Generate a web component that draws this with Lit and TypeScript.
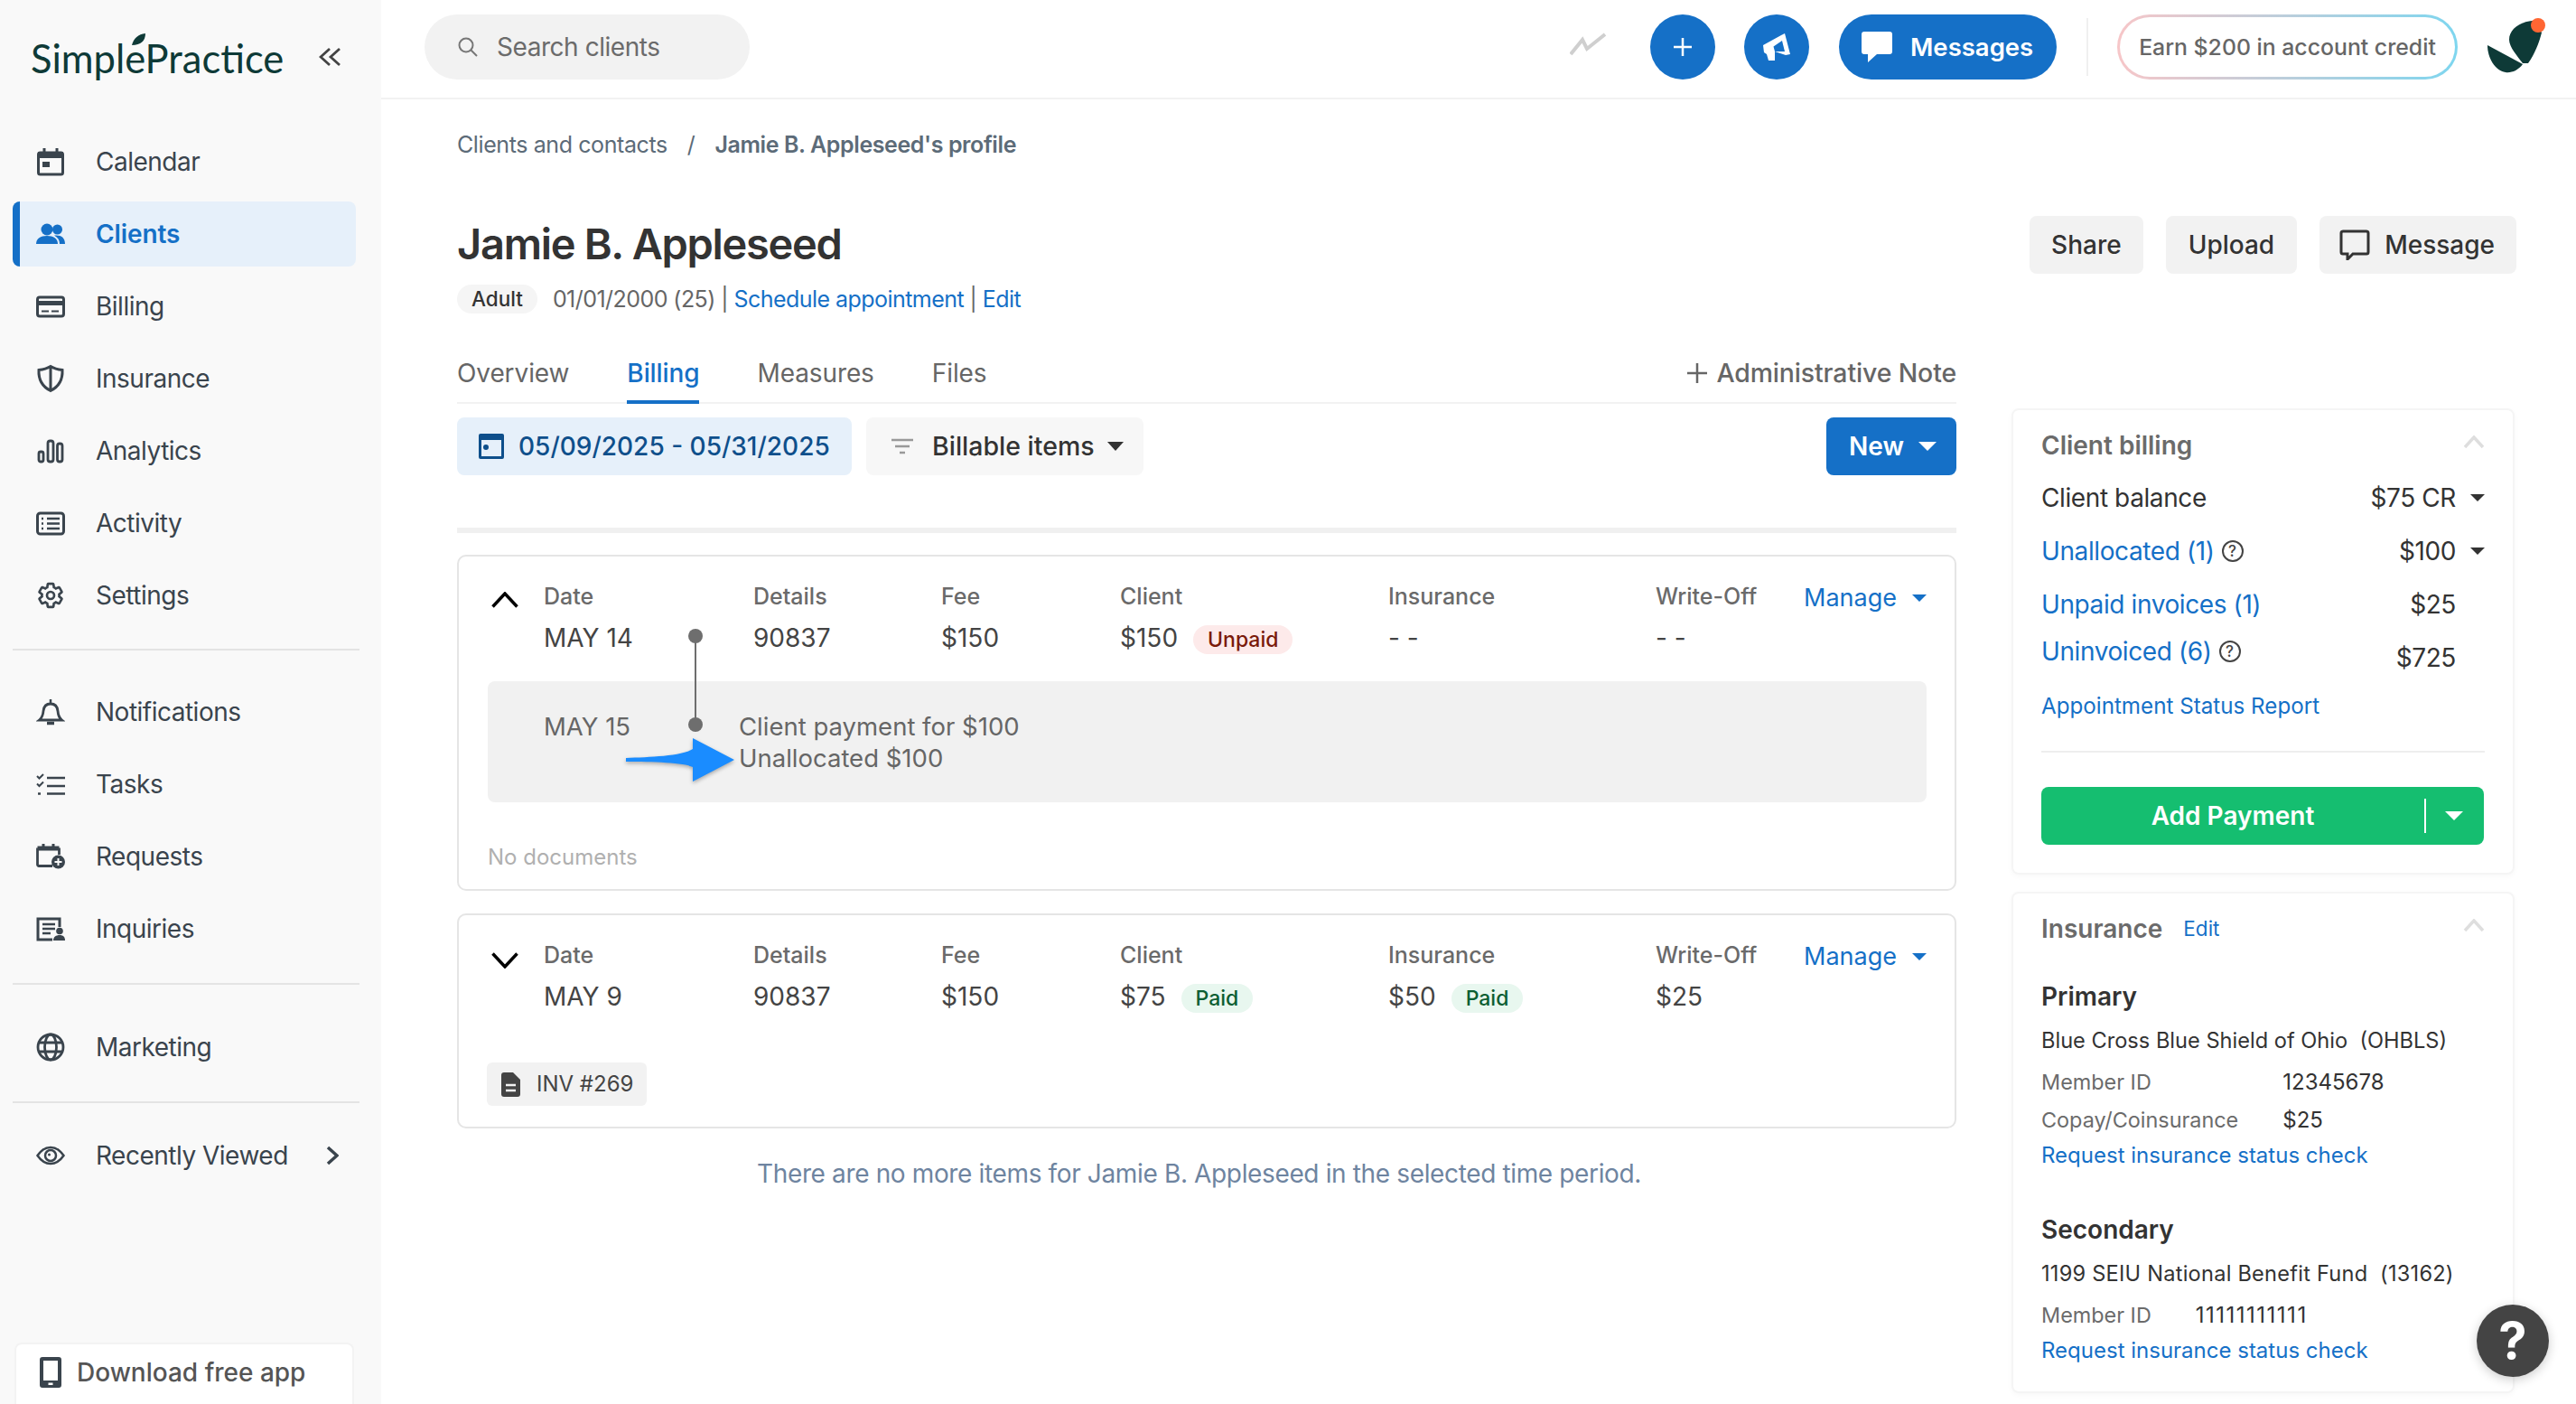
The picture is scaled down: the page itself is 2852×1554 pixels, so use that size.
import { LitElement, html, css, svg } from "lit";
import { customElement } from "lit/decorators.js";

const INK = "currentColor";

const ic = (body: unknown, w = 32, h = 32) => html`<svg class="ico" width=${w} height=${h} viewBox="0 0 ${w} ${h}" fill="none" stroke=${INK} stroke-width="3">${body}</svg>`;

const navIcons: Record<string, unknown> = {
  Calendar: ic(svg`<rect x="2.5" y="6" width="27" height="24" rx="2"/><rect x="2" y="5" width="28" height="7" fill="currentColor" stroke="none"/><path d="M9 1v6M23 1v6"/><rect x="7" y="16" width="8" height="6" fill="currentColor" stroke="none"/>`),
  Clients: ic(svg`<g fill="currentColor" stroke="none"><circle cx="12" cy="11" r="6.5"/><circle cx="23.5" cy="11" r="5.5"/><path d="M0 27c0-6 5-9 12-9s12 3 12 9z"/><path d="M20 17.600c7-1 12 2 12 9.400h-6c0-4-2-7-6-9.400z"/></g>`),
  Billing: ic(svg`<rect x="1.500" y="6" width="29" height="21" rx="2.500"/><path d="M1 12.500h30" stroke-width="5"/><path d="M6 21.500h8M17 21.500h8" stroke-width="2"/>`),
  Insurance: ic(svg`<path d="M16 2.500c4 2.500 8 3.500 13 4 .5 10-3 18-13 23-10-5-13.500-13-13-23 5-.5 9-1.500 13-4zM16 3v26"/>`),
  Analytics: ic(svg`<g stroke-width="2.800"><rect x="3" y="17" width="5" height="11" rx="2"/><rect x="13" y="5" width="6" height="23" rx="2.500"/><rect x="23.500" y="8" width="5.500" height="20" rx="2.500"/></g>`),
  Activity: ic(svg`<rect x="1.500" y="5" width="29" height="23" rx="3"/><path d="M12 11h14M12 16.500h14M12 22h14" stroke-width="2.500"/><path d="M6 11h2M6 16.500h2M6 22h2" stroke-width="2.500"/>`),
  Settings: html`<svg class="ico" width="32" height="32" viewBox="0 0 24 24" fill="none" stroke="currentColor" stroke-width="2"><path d="M19.14 12.94c.04-.3.06-.61.06-.94 0-.32-.02-.64-.07-.94l2.030-1.580c.18-.14.23-.41.12-.61l-1.920-3.320c-.12-.22-.37-.29-.59-.22l-2.390.96c-.5-.38-1.030-.7-1.620-.94L14.400 2.810c-.04-.24-.24-.41-.48-.41h-3.840c-.24 0-.43.17-.47.41L9.250 5.350C8.660 5.590 8.120 5.920 7.630 6.290L5.240 5.330c-.22-.08-.47 0-.59.22L2.740 8.870c-.12.21-.08.47.12.61l2.030 1.580c-.05.3-.09.63-.09.94s.02.64.07.94l-2.030 1.580c-.18.14-.23.41-.12.61l1.920 3.320c.12.22.37.29.59.22l2.390-.96c.5.38 1.030.7 1.620.94l.36 2.540c.05.24.24.41.48.41h3.840c.24 0 .44-.17.47-.41l.36-2.540c.59-.24 1.130-.56 1.620-.94l2.390.96c.22.08.47 0 .59-.22l1.920-3.320c.12-.22.07-.47-.12-.61z"/><circle cx="12" cy="12" r="3"/></svg>`,
  Notifications: ic(svg`<path d="M3.500 25c2.500-2 4-4 4.500-10 .5-5 3.500-8 8-8s7.500 3 8 8c.5 6 2 8 4.500 10z" stroke-width="2.800"/><path d="M16 2v4" stroke-width="2.500"/><path d="M12 28.500h8" stroke-width="3.500"/>`),
  Tasks: ic(svg`<path d="M12 9h20M12 18h20M12 26.500h20" stroke-width="2.500"/><path d="M1 7l2.500 2.500L8 5M1 15.500l2.500 2.500L8 13.500" stroke-width="2"/><path d="M2 26.500h3" stroke-width="2.500"/>`),
  Requests: ic(svg`<path d="M18 26.500H3a1.500 1.500 0 0 1-1.500-1.500V8h24v6" stroke-width="2.800"/><path d="M1.500 6.500h24" stroke-width="4"/><path d="M8 2v4M19 2v4" stroke-width="3"/><circle cx="24.500" cy="22" r="7.500" fill="currentColor" stroke="none"/><path d="M24.500 18v8M20.500 22h8" stroke="#f9f9f9" stroke-width="2"/>`),
  Inquiries: ic(svg`<path d="M26 14V5H2v23h16" stroke-width="3"/><path d="M7 11h14M7 16h14M7 21h9" stroke-width="2.500"/><circle cx="26" cy="18.500" r="3.800" fill="currentColor" stroke="none"/><path d="M19 29c0-4 3-6 7-6s6 2 6 6z" fill="currentColor" stroke="none"/>`),
  Marketing: ic(svg`<g stroke-width="2.800"><circle cx="16" cy="16" r="14"/><ellipse cx="16" cy="16" rx="6.500" ry="14"/><path d="M3 11h26M3 21h26"/></g>`),
  "Recently Viewed": ic(svg`<path d="M1.500 16C6 9.500 10.500 7 16 7s10 2.500 14.500 9c-4.500 6.500-9 9-14.500 9S6 22.500 1.500 16z" stroke-width="2.500"/><circle cx="16" cy="16" r="6" stroke-width="2.500"/><circle cx="14.500" cy="15" r="1.500" fill="currentColor" stroke="none"/>`),
};

const navGroups = [
  ["Calendar", "Clients", "Billing", "Insurance", "Analytics", "Activity", "Settings"],
  ["Notifications", "Tasks", "Requests", "Inquiries"],
  ["Marketing"],
];

const caret = (cls = "") => html`<i class="caret ${cls}"></i>`;
const help = () => html`<span class="qmark">?</span>`;
const chevUp = () => html`<svg class="chev-soft" width="24" height="14" viewBox="0 0 24 14" fill="none" stroke="#dedede" stroke-width="3.500"><path d="M2 13L12 2l10 11"/></svg>`;

@customElement("app-root")
export class AppRoot extends LitElement {
  static styles = css`
    :host {
      display: flex;
      position: relative;
      width: 2852px;
      height: 1554px;
      overflow: hidden;
      background: #fff;
      color: #333;
      font-family: Inter, "Liberation Sans", sans-serif;
      font-size: 28px;
      line-height: 40px;
    }
    svg { display: block; flex: none; }
    a { color: #1570c7; text-decoration: none; }

    .side {
      width: 422px;
      flex: none;
      height: 1554px;
      box-sizing: border-box;
      background: #f9f9f9;
      display: flex;
      flex-direction: column;
      color: #3a444d;
    }
    .brand {
      height: 143px;
      box-sizing: border-box;
      padding: 32px 45px 0 34px;
      display: flex;
      justify-content: space-between;
      flex: none;
    }
    .logo {
      position: relative;
      font-family: Lato, "Open Sans", sans-serif;
      font-size: 43.500px;
      line-height: 64px;
      color: #0e3a37;
    }
    .leaf { position: absolute; left: 108px; top: 4px; }
    .collapse { margin-top: 20px; color: #444; }
    .nav { display: flex; flex-direction: column; gap: 8px; padding: 0 28px 0 14px; }
    .nav-item {
      height: 72px;
      display: flex;
      align-items: center;
      box-sizing: border-box;
      padding-left: 26px;
      border-radius: 8px;
      font-size: 28px;
      letter-spacing: -0.5px;
    }
    .nav-item .ico { margin-right: 34px; }
    .nav-item.on {
      background: #e6f0fa;
      color: #1570c7;
      font-weight: 600;
      letter-spacing: -0.1px;
      border-left: 8px solid #1570c7;
      padding-left: 18px;
    }
    .rule { height: 2px; background: #e4e4e4; margin: 0 24px 0 14px; flex: none; }
    .rule.a { margin-top: 23px; margin-bottom: 32px; }
    .rule.b { margin-top: 24px; margin-bottom: 33px; }
    .rule.c { margin-top: 24px; margin-bottom: 22px; }
    .recent-chev { margin-left: auto; margin-right: 19px; }
    .recent .ico:first-child { margin-right: 34px; }
    .download {
      margin: auto 30px 0 16px;
      height: 68px;
      box-sizing: border-box;
      background: #fff;
      border: 2px solid #f3f3f3;
      border-bottom: 0;
      border-radius: 8px 8px 0 0;
      display: flex;
      align-items: center;
      padding: 0 0 4px 26px;
      gap: 17px;
      color: #555;
      font-weight: 500;
      font-size: 28px;
    }

    .main { flex: 1; min-width: 0; display: flex; flex-direction: column; }
    .top {
      height: 110px;
      flex: none;
      box-sizing: border-box;
      border-bottom: 2px solid #f2f2f2;
      padding: 16px 33px 0 48px;
      display: flex;
      align-items: flex-start;
    }
    .search {
      width: 360px;
      height: 72px;
      box-sizing: border-box;
      background: #f2f2f2;
      border-radius: 36px;
      display: flex;
      align-items: center;
      padding-left: 37px;
      gap: 21px;
      color: #6b6b6b;
      font-size: 28px;
      letter-spacing: -0.45px;
    }
    .trend { margin: 20px 48px 0 auto; }
    .round {
      width: 72px;
      height: 72px;
      border-radius: 36px;
      background: #1570c7;
      color: #fff;
      display: flex;
      align-items: center;
      justify-content: center;
      margin-right: 32px;
      flex: none;
    }
    .round + .round { margin-right: 33px; }
    .msgs {
      width: 241px;
      height: 72px;
      box-sizing: border-box;
      border-radius: 36px;
      background: #1570c7;
      color: #fff;
      display: flex;
      align-items: center;
      padding-left: 25px;
      gap: 20px;
      font-weight: 600;
      font-size: 27.500px;
      flex: none;
    }
    .vsep { width: 2px; height: 64px; background: #f0f0f0; margin: 4px 32px 0 33px; flex: none; }
    .earn {
      width: 377px;
      height: 72px;
      box-sizing: border-box;
      border: 3px solid transparent;
      border-radius: 36px;
      background: linear-gradient(#fff, #fff) padding-box, linear-gradient(90deg, #f7c6c8, #7ed6ef) border-box;
      display: flex;
      align-items: center;
      justify-content: center;
      color: #666;
      font-weight: 500;
      font-size: 24.800px;
      flex: none;
      margin-right: 33px;
    }
    .mark { position: relative; width: 65px; height: 62px; margin-top: 4px; flex: none; }
    .mark .dot { position: absolute; left: 48px; top: 0; width: 16px; height: 16px; border-radius: 50%; background: #ff6633; }

    .body {
      display: grid;
      grid-template-columns: 1660px 557px;
      column-gap: 61px;
      padding-left: 84px;
    }
    .crumbs {
      margin-top: 32px;
      line-height: 36px;
      font-size: 25px;
      letter-spacing: -0.4px;
      color: #5c6b78;
      display: flex;
    }
    .crumbs b { font-weight: 600; }
    .crumbs span { margin: 0 22px; }
    h1 {
      margin: 60px 0 0;
      font-size: 47px;
      line-height: 64px;
      font-weight: 600;
      color: #333;
      letter-spacing: -1.300px;
    }
    .meta { margin-top: 13px; height: 32px; display: flex; align-items: center; font-size: 25px; letter-spacing: -0.55px; color: #666; white-space: pre; }
    .pill-adult {
      background: #f5f5f5;
      color: #333;
      font-weight: 500;
      font-size: 22.500px;
      letter-spacing: 0;
      height: 32px;
      line-height: 32px;
      padding: 0 16px;
      border-radius: 16px;
      margin-right: 17px;
    }
    .tabs {
      margin-top: 33px;
      height: 67px;
      display: flex;
      gap: 64px;
      box-shadow: inset 0 -2px 0 #f2f2f2;
      color: #666;
      font-size: 28px;
      letter-spacing: -0.1px;
      line-height: 36px;
    }
    .tab { padding-top: 15px; box-sizing: border-box; height: 67px; }
    .tab.on { color: #1570c7; border-bottom: 4px solid #1570c7; font-weight: 500; }
    .add-note { margin-left: auto; padding-top: 15px; display: flex; align-items: center; height: 36px; gap: 10px; color: #666; font-weight: 500; font-size: 28.400px; }
    .tools { margin-top: 15px; height: 64px; display: flex; gap: 16px; font-weight: 500; }
    .btn {
      height: 64px;
      box-sizing: border-box;
      border-radius: 8px;
      display: flex;
      align-items: center;
    }
    .dates { width: 437px; background: #e6f0fa; color: #0e4f8b; padding-left: 24px; gap: 16px; font-size: 28px; }
    .billable { width: 307px; background: #f7f7f7; padding-left: 28px; gap: 21px; font-size: 28.500px; color: #333; }
    .billable .filter { color: #999; }
    .billable .caret { margin-left: -7px; }
    .new { margin-left: auto; width: 144px; background: #1570c7; color: #fff; font-weight: 600; padding-left: 25px; gap: 16px; font-size: 28px; }
    .thick { height: 6px; margin-top: 58px; background: #f0f0f0; }

    .card {
      position: relative;
      box-sizing: border-box;
      border: 2px solid #e5e5e5;
      border-radius: 10px;
      background: #fff;
    }
    .bill1 { margin-top: 24px; height: 372px; }
    .bill2 { margin-top: 25px; height: 238px; }
    .cols {
      display: grid;
      grid-template-columns: 232px 208px 198px 297px 296px 164px auto;
      align-items: start;
      padding: 27px 0 0 94px;
    }
    .cell { display: flex; flex-direction: column; gap: 9px; }
    .lbl { font-size: 25px; line-height: 34px; font-weight: 500; color: #6a6a6a; }
    .val { display: flex; align-items: center; gap: 17px; font-size: 28px; line-height: 40px; color: #444; height: 40px; }
    .badge { font-size: 23px; font-weight: 500; height: 32px; line-height: 32px; padding: 0 16px; border-radius: 16px; margin-top: 4px; }
    .badge.unpaid { background: #fdeaea; color: #7a1a0a; }
    .badge.paid { background: #e8f7ef; color: #0c5e33; }
    .manage { display: flex; align-items: center; gap: 17px; color: #1570c7; font-size: 27px; line-height: 34px; margin-top: 2px; }
    .toggle { position: absolute; left: 36px; top: 39px; color: #000; }
    .bill2 .toggle { top: 41px; }
    .pay {
      margin: 28px 31px 0 32px;
      height: 134px;
      background: #f1f1f1;
      border-radius: 8px;
      display: grid;
      grid-template-columns: 216px auto;
      padding: 33px 0 0 62px;
      box-sizing: border-box;
      color: #666;
      font-size: 27.500px;
      line-height: 34.500px;
    }
    .no-docs { margin: 44px 0 0 32px; font-size: 24px; line-height: 34px; color: #b0b0b0; }
    .tl-line { position: absolute; left: 261px; top: 87px; width: 2px; height: 99px; background: #6e6e6e; }
    .tl-dot { position: absolute; left: 254px; width: 16px; height: 16px; border-radius: 50%; background: #6e6e6e; }
    .arrow { position: absolute; left: 185px; top: 200px; filter: drop-shadow(0 2px 2px rgba(0, 0, 0, 0.3)); }
    .inv {
      margin: 53px 0 0 31px;
      width: 177px;
      height: 48px;
      box-sizing: border-box;
      border-radius: 6px;
      background: #f2f2f2;
      display: flex;
      align-items: center;
      padding-left: 16px;
      gap: 18px;
      font-size: 24px;
      color: #444;
    }
    .none { margin-top: 30px; padding-left: 332px; color: #6e84a0; font-size: 28px; letter-spacing: -0.36px; line-height: 40px; }

    .right { display: flex; flex-direction: column; }
    .actions { margin: 129px -2px 0 0; height: 64px; display: flex; justify-content: flex-end; gap: 25px; font-weight: 500; font-size: 28px; }
    .act { background: #f2f2f2; padding: 0 24px; color: #333; gap: 16px; }
    .act.up { padding: 0 25px; }
    .act.chat { padding: 0 24px 0 22px; }
    .panel {
      box-sizing: border-box;
      border: 2px solid #f5f5f5;
      border-radius: 8px;
      background: #fff;
      padding: 21px 31px 28px 31px;
      box-shadow: 0 2px 6px rgba(0, 0, 0, 0.03);
    }
    .p-bill { margin-top: 149px; height: 516px; }
    .p-ins { margin-top: 19px; height: 555px; padding-top: 21px; }
    .p-head { display: flex; align-items: center; height: 36px; font-weight: 600; color: #6b6b6b; font-size: 28px; }
    .p-head .chev-soft { margin-left: auto; margin-top: -8px; }
    .p-head a { font-size: 22.500px; font-weight: 400; margin-left: 23px; }
    .bal { display: flex; height: 40px; font-size: 28px; letter-spacing: -0.4px; color: #333; }
    .bal .amt { margin-left: auto; }
    .bal .slot { width: 32px; display: flex; align-items: center; justify-content: flex-end; height: 40px; }
    .bal.first { margin-top: 20px; }
    .bal.r2 { margin-top: 19px; }
    .bal.r3 { margin-top: 19px; }
    .bal.r4 { margin-top: 12px; }
    .bal.r4 .amt { padding-top: 7px; }
    .bal a { display: flex; align-items: center; gap: 8px; }
    .qmark {
      width: 24px;
      height: 24px;
      box-sizing: border-box;
      border: 2px solid #444;
      border-radius: 50%;
      color: #444;
      font-size: 17px;
      font-weight: 500;
      line-height: 20px;
      text-align: center;
      flex: none;
      letter-spacing: 0;
    }
    .report { display: block; margin-top: 24px; font-size: 24.200px; line-height: 34px; }
    .hr { height: 2px; background: #eee; margin-top: 32px; }
    .addpay {
      margin-top: 38px;
      width: 490px;
      height: 64px;
      box-sizing: border-box;
      border-radius: 8px;
      background: #15be70;
      color: #fff;
      font-weight: 600;
      font-size: 28px;
      display: flex;
      align-items: center;
    }
    .addpay .label { width: 424px; text-align: center; }
    .addpay .sep { width: 2px; height: 38px; background: #fff; }
    .addpay .caret { margin-left: 21px; }

    .kind { font-weight: 600; font-size: 28px; line-height: 36px; color: #333; margin-top: 39px; }
    .kind.sec { margin-top: 46px; }
    .plan { font-size: 23.600px; line-height: 36px; margin-top: 13px; color: #333; white-space: pre; }
    .plan.wide { letter-spacing: 0.23px; }
    .kv { display: grid; grid-template-columns: auto 1fr; column-gap: 49px; row-gap: 6px; margin-top: 10px; line-height: 36px; }
    .kv span { color: #6b6b6b; font-size: 23.400px; }
    .kv b { font-weight: 400; color: #333; font-size: 24px; }
    .kv b.ones { letter-spacing: 1.500px; }
    .req { display: block; margin-top: 3px; font-size: 24px; line-height: 36px; }

    .caret { display: block; width: 0; height: 0; border-style: solid; border-color: currentColor transparent transparent; border-width: 10px 10px 0; flex: none; }
    .caret.sm { border-width: 8px 8px 0; }
    .caret.md { border-width: 10px 9px 0; }

    .help {
      position: absolute;
      left: 2742px;
      top: 1444px;
      width: 80px;
      height: 80px;
      border-radius: 50%;
      background: #444;
      color: #fff;
      display: flex;
      align-items: center;
      justify-content: center;
      font-size: 56px;
      font-weight: 700;
      box-shadow: 0 3px 12px rgba(0, 0, 0, 0.2);
    }
  `;

  private _navItem(name: string, on = false) {
    return html`<div class="nav-item ${on ? "on" : ""}">${navIcons[name]}<span>${name}</span></div>`;
  }

  private _side() {
    return html`<aside class="side">
      <div class="brand">
        <div class="logo">SimplePractice
          <svg class="leaf" width="20" height="20" viewBox="0 0 20 20"><path d="M4 14C6 6 11 2 19 1c0 8-5 13-15 13z" fill="#0e3a37"/></svg>
        </div>
        <svg class="collapse" width="24" height="22" viewBox="0 0 24 22" fill="none" stroke="currentColor" stroke-width="2.800"><path d="M12 2L2 11l10 9M23 2L13 11l10 9"/></svg>
      </div>
      <nav class="nav">${navGroups[0].map((n) => this._navItem(n, n === "Clients"))}</nav>
      <div class="rule a"></div>
      <nav class="nav">${navGroups[1].map((n) => this._navItem(n))}</nav>
      <div class="rule b"></div>
      <nav class="nav">${navGroups[2].map((n) => this._navItem(n))}</nav>
      <div class="rule c"></div>
      <nav class="nav">
        <div class="nav-item recent">
          ${navIcons["Recently Viewed"]}<span>Recently Viewed</span>
          <svg class="recent-chev" width="14" height="22" viewBox="0 0 14 22" fill="none" stroke="currentColor" stroke-width="3.500"><path d="M2 2l10 9-10 9"/></svg>
        </div>
      </nav>
      <div class="download">
        <svg width="24" height="34" viewBox="0 0 24 34"><path d="M3 0h18a3 3 0 0 1 3 3v28a3 3 0 0 1-3 3H3a3 3 0 0 1-3-3V3a3 3 0 0 1 3-3zm1 4v22h16V4z" fill-rule="evenodd" fill="#3a444d"/><rect x="9.500" y="28.500" width="5" height="2.500" fill="#fff"/></svg>
        <span>Download free app</span>
      </div>
    </aside>`;
  }

  private _top() {
    return html`<header class="top">
      <div class="search">
        <svg width="22" height="22" viewBox="0 0 22 22" fill="none" stroke="#777" stroke-width="2"><circle cx="9" cy="9" r="7.500"/><path d="M14.500 14.500L21 21"/></svg>
        <span>Search clients</span>
      </div>
      <svg class="trend" width="41" height="26" viewBox="0 0 41 26" fill="none" stroke="#cfcfcf" stroke-width="4"><path d="M1 24L14 8l5 10L39 2"/></svg>
      <div class="round"><svg width="24" height="24" viewBox="0 0 24 24" stroke="#fff" stroke-width="2.500"><path d="M12 2v20M2 12h20"/></svg></div>
      <div class="round"><svg width="32" height="32" viewBox="0 0 32 32"><path fill-rule="evenodd" fill="#fff" d="M1 14L21 3l4-2 6 23-5 1-12-4v10H7l-2-7-3-2zM12.500 15.500L14 21l11 0-3-12z"/></svg></div>
      <div class="msgs">
        <svg width="34" height="34" viewBox="0 0 34 34"><path d="M3 0h28a3 3 0 0 1 3 3v19a3 3 0 0 1-3 3H17l-10 9v-9H3a3 3 0 0 1-3-3V3a3 3 0 0 1 3-3z" fill="#fff"/></svg>
        <span>Messages</span>
      </div>
      <div class="vsep"></div>
      <div class="earn">Earn $200 in account credit</div>
      <div class="mark">
        <svg width="65" height="62" viewBox="0 0 65 62" fill="#0e3a37"><path d="M50 3C36 4 24 12 24 24c0 8 9 18 15 26h6c7-10 12-22 15-34z"/><path d="M0 30l39 21c-5 7-13 10-19 9C8 58 0 44 0 30z"/></svg>
        <i class="dot"></i>
      </div>
    </header>`;
  }

  private _left() {
    return html`<section class="left">
      <div class="crumbs">Clients and contacts<span>/</span><b>Jamie B. Appleseed's profile</b></div>
      <h1>Jamie B. Appleseed</h1>
      <div class="meta"><span class="pill-adult">Adult</span>01/01/2000 (25) | <a>Schedule appointment</a> | <a>Edit</a></div>
      <div class="tabs">
        <div class="tab">Overview</div>
        <div class="tab on">Billing</div>
        <div class="tab">Measures</div>
        <div class="tab">Files</div>
        <div class="add-note"><svg width="22" height="22" viewBox="0 0 22 22" stroke="#666" stroke-width="2.500"><path d="M11 0v22M0 11h22"/></svg>Administrative Note</div>
      </div>
      <div class="tools">
        <div class="btn dates">
          <svg width="28" height="28" viewBox="0 0 28 28"><path d="M2 0h24a2 2 0 0 1 2 2v24a2 2 0 0 1-2 2H2a2 2 0 0 1-2-2V2a2 2 0 0 1 2-2zm1 7v18h22V7z" fill="#0e4f8b" fill-rule="evenodd"/><circle cx="8" cy="15" r="3" fill="#0e4f8b"/></svg>
          <span>05/09/2025 - 05/31/2025</span>
        </div>
        <div class="btn billable">
          <svg class="filter" width="24" height="18" viewBox="0 0 24 18" stroke="currentColor" stroke-width="2.500"><path d="M0 2h24M4 9h16M9 16h6"/></svg>
          <span>Billable items</span>${caret("md")}
        </div>
        <div class="btn new"><span>New</span>${caret()}</div>
      </div>
      <div class="thick"></div>

      <div class="card bill1">
        <svg class="toggle" width="30" height="18" viewBox="0 0 30 18" fill="none" stroke="currentColor" stroke-width="3.500"><path d="M1.500 16.500L15 2l13.500 14.500"/></svg>
        <div class="cols">
          <div class="cell"><span class="lbl">Date</span><span class="val">MAY 14</span></div>
          <div class="cell"><span class="lbl">Details</span><span class="val">90837</span></div>
          <div class="cell"><span class="lbl">Fee</span><span class="val">$150</span></div>
          <div class="cell"><span class="lbl">Client</span><span class="val">$150<span class="badge unpaid">Unpaid</span></span></div>
          <div class="cell"><span class="lbl">Insurance</span><span class="val">- -</span></div>
          <div class="cell"><span class="lbl">Write-Off</span><span class="val">- -</span></div>
          <div class="manage">Manage ${caret("sm")}</div>
        </div>
        <div class="pay">
          <span>MAY 15</span>
          <span>Client payment for $100<br />Unallocated $100</span>
        </div>
        <div class="no-docs">No documents</div>
        <i class="tl-line"></i>
        <i class="tl-dot" style="top:80px"></i>
        <i class="tl-dot" style="top:178px"></i>
        <svg class="arrow" width="124" height="52" viewBox="0 0 124 52"><path d="M0 23c25-1 62-2 74-10V1l46 24-46 24V33C64 28 30 27 0 27z" fill="#1a8cff"/></svg>
      </div>

      <div class="card bill2">
        <svg class="toggle" width="30" height="18" viewBox="0 0 30 18" fill="none" stroke="currentColor" stroke-width="3.500"><path d="M1.500 1.500L15 16l13.500-14.500"/></svg>
        <div class="cols">
          <div class="cell"><span class="lbl">Date</span><span class="val">MAY 9</span></div>
          <div class="cell"><span class="lbl">Details</span><span class="val">90837</span></div>
          <div class="cell"><span class="lbl">Fee</span><span class="val">$150</span></div>
          <div class="cell"><span class="lbl">Client</span><span class="val">$75<span class="badge paid">Paid</span></span></div>
          <div class="cell"><span class="lbl">Insurance</span><span class="val">$50<span class="badge paid">Paid</span></span></div>
          <div class="cell"><span class="lbl">Write-Off</span><span class="val">$25</span></div>
          <div class="manage">Manage ${caret("sm")}</div>
        </div>
        <div class="inv">
          <svg width="21" height="27" viewBox="0 0 21 27"><path d="M3 0h10l8 8v16a3 3 0 0 1-3 3H3a3 3 0 0 1-3-3V3a3 3 0 0 1 3-3z" fill="#444"/><path d="M5 14h11M5 20h11" stroke="#f2f2f2" stroke-width="2.500"/></svg>
          <span>INV #269</span>
        </div>
      </div>
      <div class="none">There are no more items for Jamie B. Appleseed in the selected time period.</div>
    </section>`;
  }

  private _right() {
    return html`<section class="right">
      <div class="actions">
        <div class="btn act">Share</div>
        <div class="btn act up">Upload</div>
        <div class="btn act chat">
          <svg width="34" height="34" viewBox="0 0 34 34" fill="none" stroke="#333" stroke-width="3"><path d="M4 2h26a2 2 0 0 1 2 2v21a2 2 0 0 1-2 2H15l-6 6v-6H4a2 2 0 0 1-2-2V4a2 2 0 0 1 2-2z"/></svg>
          Message
        </div>
      </div>
      <div class="panel p-bill">
        <div class="p-head">Client billing${chevUp()}</div>
        <div class="bal first"><span>Client balance</span><span class="amt">$75 CR</span><span class="slot">${caret("sm")}</span></div>
        <div class="bal r2"><a>Unallocated (1) ${help()}</a><span class="amt">$100</span><span class="slot">${caret("sm")}</span></div>
        <div class="bal r3"><a>Unpaid invoices (1)</a><span class="amt">$25</span><span class="slot"></span></div>
        <div class="bal r4"><a>Uninvoiced (6) ${help()}</a><span class="amt">$725</span><span class="slot"></span></div>
        <a class="report">Appointment Status Report</a>
        <div class="hr"></div>
        <div class="addpay"><span class="label">Add Payment</span><i class="sep"></i>${caret()}</div>
      </div>
      <div class="panel p-ins">
        <div class="p-head">Insurance<a>Edit</a>${chevUp()}</div>
        <div class="kind">Primary</div>
        <div class="plan">Blue Cross Blue Shield of Ohio  (OHBLS)</div>
        <div class="kv"><span>Member ID</span><b>12345678</b><span>Copay/Coinsurance</span><b>$25</b></div>
        <a class="req">Request insurance status check</a>
        <div class="kind sec">Secondary</div>
        <div class="plan wide">1199 SEIU National Benefit Fund  (13162)</div>
        <div class="kv"><span>Member ID</span><b class="ones">11111111111</b></div>
        <a class="req">Request insurance status check</a>
      </div>
    </section>`;
  }

  render() {
    return html`
      ${this._side()}
      <div class="main">
        ${this._top()}
        <div class="body">${this._left()}${this._right()}</div>
      </div>
      <div class="help">?</div>
    `;
  }
}
